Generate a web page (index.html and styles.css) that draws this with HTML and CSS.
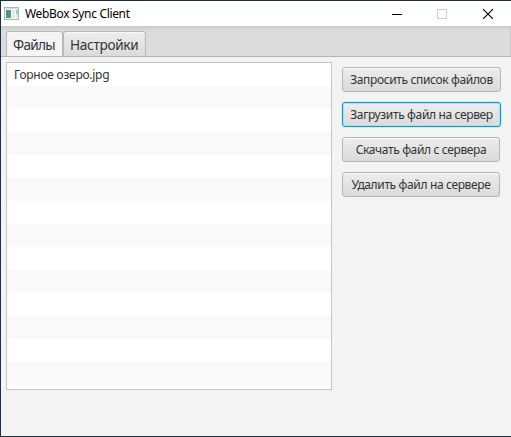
FILE: index.html
```
<!DOCTYPE html>
<html lang="ru">
<head>
<meta charset="utf-8">
<title>WebBox Sync Client</title>
<link rel="stylesheet" href="styles.css">
</head>
<body>
<div class="window">
  <header class="titlebar">
    <svg class="app-icon" width="15" height="13" viewBox="0 0 15 13">
      <defs><linearGradient id="g" x1="0" y1="0" x2="1" y2="1"><stop offset="0" stop-color="#4f80b5"/><stop offset="1" stop-color="#51aa68"/></linearGradient></defs>
      <rect x=".5" y=".5" width="14" height="12" fill="#f5f5f5" stroke="#b2b5b6"/>
      <rect x="1" y="1" width="13" height="1" fill="#d5d9dc"/>
      <rect x="2" y="3" width="5" height="8" fill="url(#g)"/>
      <rect x="8" y="3" width="3" height="8" fill="#e5e9ea"/>
      <rect x="12" y="3" width="2" height="4" fill="#a5c6cf"/>
      <rect x="12" y="7" width="2" height="4" fill="#dcebe2"/>
    </svg>
    <h1 class="title">WebBox Sync Client</h1>
    <div class="controls">
      <svg width="10" height="10" viewBox="0 0 10 10"><path d="M0 5.5H10" stroke="#000" fill="none"/></svg>
      <svg width="10" height="10" viewBox="0 0 10 10"><rect x=".5" y=".5" width="9" height="9" stroke="#ccc" fill="none"/></svg>
      <svg class="close" width="10" height="10" viewBox="0 0 10 10"><path d="M0 0L10 10M10 0L0 10" stroke="#000" stroke-width="1.1" fill="none"/></svg>
    </div>
  </header>
  <nav class="tabs">
    <div class="tab tab-files active">Файлы</div>
    <div class="tab tab-settings">Настройки</div>
  </nav>
  <main class="content">
    <div class="list"><div class="row">Горное озеро.jpg</div></div>
    <div class="actions">
      <button class="btn btn-list">Запросить список файлов</button>
      <button class="btn btn-upload focused">Загрузить файл на сервер</button>
      <button class="btn btn-download">Скачать файл с сервера</button>
      <button class="btn btn-delete">Удалить файл на сервере</button>
    </div>
  </main>
</div>
</body>
</html>
```
FILE: styles.css
```
* { box-sizing: border-box; }
body { margin: 0; font-family: "Noto Sans", "Open Sans", sans-serif; font-size: 12px; color: #333; }
.window { width: 511px; height: 437px; border: 1px solid #1b3048; border-right: 0; background: #f3f3f3; display: flex; flex-direction: column; overflow: hidden; }
.titlebar { height: 25px; flex: none; background: #fff; display: flex; align-items: center; padding: 0 18px 0 3px; }
.app-icon { flex: none; }
.title { margin: 0 0 0 6px; font-size: 12px; font-weight: 400; line-height: 24px; color: #000; letter-spacing: -0.33px; white-space: nowrap; }
.controls { display: flex; gap: 35px; margin-left: auto; }
.controls svg { display: block; }
.controls .close { margin-left: 1px; }
.tabs { height: 31px; flex: none; display: flex; align-items: flex-end; padding-left: 5px; border-bottom: 1px solid #b5b5b5; background: linear-gradient(#cacaca, #dcdcdc 5px); box-shadow: inset -1px 0 #c8c8c8; }
.tab { height: 25px; border: 1px solid #b8b8b8; border-bottom: 0; border-radius: 3px 3px 0 0; background: linear-gradient(#ededed, #dbdbdb); box-shadow: inset 0 1px #f8f8f8; font-size: 13.6px; line-height: 25px; padding-left: 6px; white-space: nowrap; }
.tab.active { background: #f4f4f4; }
.tab-files { width: 57px; letter-spacing: -0.7px; }
.tab-settings { width: 83px; letter-spacing: -0.3px; }
.content { flex: 1; display: flex; align-items: flex-start; padding: 5px 0 0 5px; }
.list { width: 326px; height: 328px; border: 1px solid #c5c5c5; background: repeating-linear-gradient(#fff 0 23px, #f9f9f9 23px 46px); }
.row { height: 23px; line-height: 24px; padding-left: 7px; letter-spacing: -0.25px; white-space: nowrap; }
.actions { display: flex; flex-direction: column; gap: 10px; padding: 5px 0 0 10px; }
.btn { display: block; width: 158px; height: 25px; margin: 0; padding: 0; border: 1px solid #b5b5b5; border-radius: 3px; background: linear-gradient(#ededed, #dadada); box-shadow: inset 0 1px #f8f8f8; font: 12px/23px "Noto Sans", "Open Sans", sans-serif; letter-spacing: -0.36px; color: #333; text-align: center; white-space: nowrap; }
.btn-list, .btn-upload { width: 159px; }
.focused { border-color: #039ed3; box-shadow: 0 0 0 1px #cfebf5, inset 0 0 0 1px #b5dcea; }
```
